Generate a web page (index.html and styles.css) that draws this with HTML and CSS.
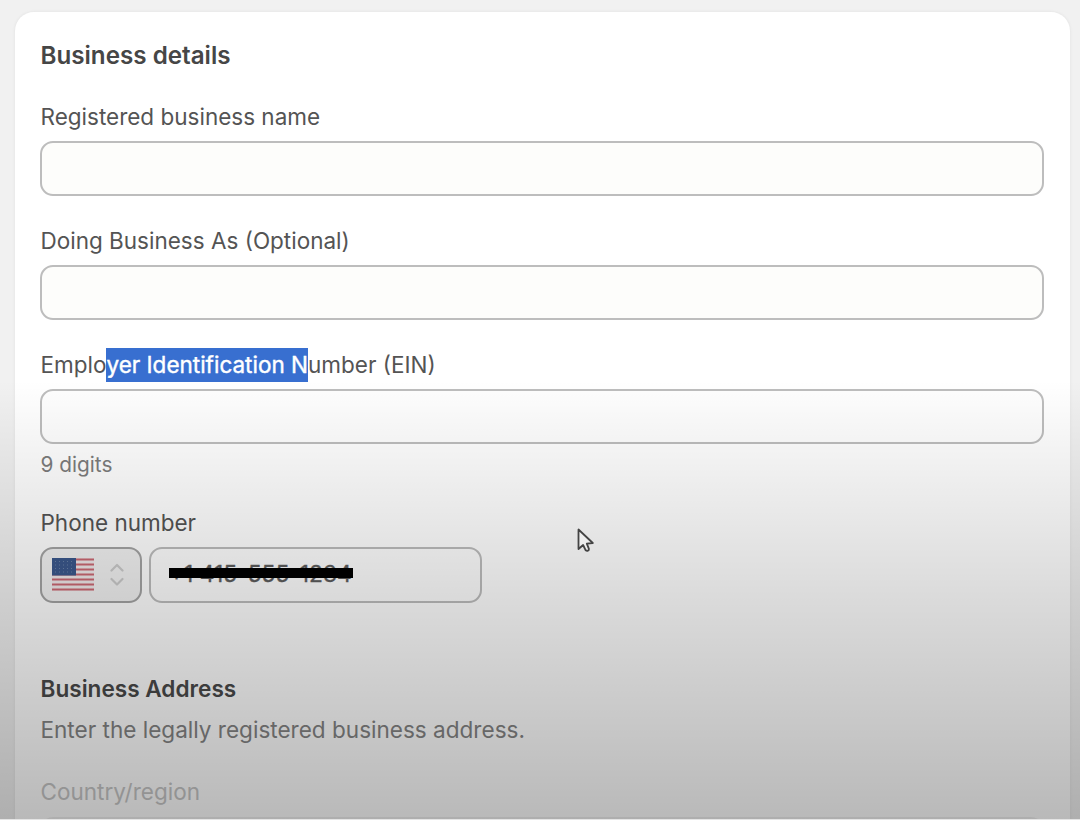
FILE: index.html
```html
<!DOCTYPE html>
<html lang="en">
<head>
<meta charset="utf-8">
<title>Business details</title>
<link rel="stylesheet" href="styles.css">
</head>
<body>
<main class="page">
  <form class="card">
    <h2 class="title">Business details</h2>
    <div class="field">
      <label class="label" for="name">Registered business name</label>
      <input class="input" id="name" type="text">
    </div>
    <div class="field">
      <label class="label" for="dba">Doing Business As (Optional)</label>
      <input class="input" id="dba" type="text">
    </div>
    <div class="field">
      <label class="label" for="ein">Emplo<span class="selected">yer Identification N</span>umber (EIN)</label>
      <input class="input input-plain" id="ein" type="text">
      <p class="hint">9 digits</p>
    </div>
    <div class="field phone">
      <span class="label">Phone number</span>
      <div class="phone-row">
        <div class="country">
          <svg class="flag" width="42" height="33" viewBox="0 0 42 33">
            <rect width="42" height="33" fill="#f0e9ea"/>
            <path d="M0 1.5h42M0 6.5h42M0 11.5h42M0 16.5h42M0 21.5h42M0 26.5h42M0 31.5h42" stroke="#cb6873" stroke-width="2.1"/>
            <rect width="24" height="17.5" fill="#3b588c"/>
            <path d="M3 3.5h20M3 7h20M3 10.5h20M3 14h20" stroke="#6880a6" stroke-width="1" stroke-dasharray="1 3"/>
          </svg>
          <svg class="chevrons" width="14" height="24" viewBox="0 0 14 24" fill="none" stroke="#cbcbcb" stroke-width="2.2" stroke-linecap="round" stroke-linejoin="round">
            <path d="M1.5 7.5 7 2 12.5 7.5M1.5 16 7 21.5 12.5 16"/>
          </svg>
        </div>
        <div class="input input-plain phone-input"><span class="redacted">+1 415-555-1234</span></div>
      </div>
    </div>
    <h3 class="subtitle">Business Address</h3>
    <p class="description">Enter the legally registered business address.</p>
    <div class="field region">
      <span class="label label-region">Country/region</span>
      <div class="input region-input"></div>
    </div>
  </form>
  <div class="shade"></div>
  <svg class="cursor" width="18" height="26" viewBox="0 0 18 26">
    <path d="M1.5 1.5v19.5l4.6-4 2.6 5.3c1.4 1.2 3.5.2 3.2-1.5L9.8 15.6l6-.6z" fill="#eee" stroke="#444" stroke-width="1.8" stroke-linejoin="round"/>
  </svg>
</main>
</body>
</html>
```
FILE: styles.css
```css
* { box-sizing: border-box; }
body { margin: 0; background: #fff; font-family: Inter, "Liberation Sans", sans-serif; }
.page {
  position: relative;
  height: 820px;
  padding: 12px 10px 0 15px;
  overflow: hidden;
  background: #f1f1f1;
  border-bottom: 1px solid #e4e4e4;
}
.card {
  height: 830px;
  padding: 26px 26px 0 25px;
  border-radius: 19px;
  background: #fff;
  box-shadow: 0 0 2px 1px #e8e8e8;
}
.title, .subtitle, .description, .hint { margin: 0; text-indent: .5px; }
.title { font-size: 24.2px; line-height: 36px; font-weight: 600; color: #464646; }
.field { margin-top: 28px; }
.label { display: block; height: 34px; margin-bottom: 7px; font-size: 22.5px; line-height: 34px; color: #545454; white-space: nowrap; text-indent: .5px; }
.title + .field { margin-top: 26px; }
.input { display: block; width: 100%; height: 55px; border: 2px solid #bdbdbd; border-radius: 13px; background: #fdfdfb; }
.input-plain { background: #fefefe; }
.selected { display: inline-block; height: 34px; background: #386fd0; color: #fff; text-indent: 0; -webkit-text-stroke: .4px #fff; }
.hint { margin-top: 4px; font-size: 20.8px; line-height: 33px; color: #7c7c7c; }
.phone { margin-top: 25px; }
.phone-row { display: flex; gap: 7px; }
.country { display: flex; align-items: center; gap: 16px; width: 102px; height: 56px; padding: 0 0 1px 10px; border: 2px solid #a4a4a4; border-radius: 13px; background: #f2f2f2; }
.phone-input { display: flex; align-items: center; width: 333px; height: 56px; padding: 0 0 2px 18px; }
.redacted { position: relative; width: 184px; font-size: 22.8px; line-height: 30px; color: #5c5c5c; white-space: nowrap; -webkit-text-stroke: .3px #5c5c5c; }
.redacted::after { content: ""; position: absolute; left: 0; top: 9px; width: 184px; height: 10px; background: #000; }
.subtitle { margin-top: 69px; font-size: 22.6px; line-height: 34px; font-weight: 600; color: #4a4a4a; }
.description { margin-top: 7px; font-size: 22.55px; line-height: 34px; color: #848484; }
.region { margin-top: 28px; }
.label-region { margin-bottom: 8px; color: #c6c6c6; }
.region-input { border-color: #f0f0f0; background: #f4f4f4; }
.shade {
  position: absolute;
  inset: 380px 0 0;
  background: linear-gradient(rgba(0,0,0,0), rgba(0,0,0,.05) 17%, rgba(0,0,0,.09) 31%, rgba(0,0,0,.14) 49%, rgba(0,0,0,.205) 73%, rgba(0,0,0,.275));
  pointer-events: none;
}
.cursor { position: absolute; left: 577px; top: 528px; }
```
